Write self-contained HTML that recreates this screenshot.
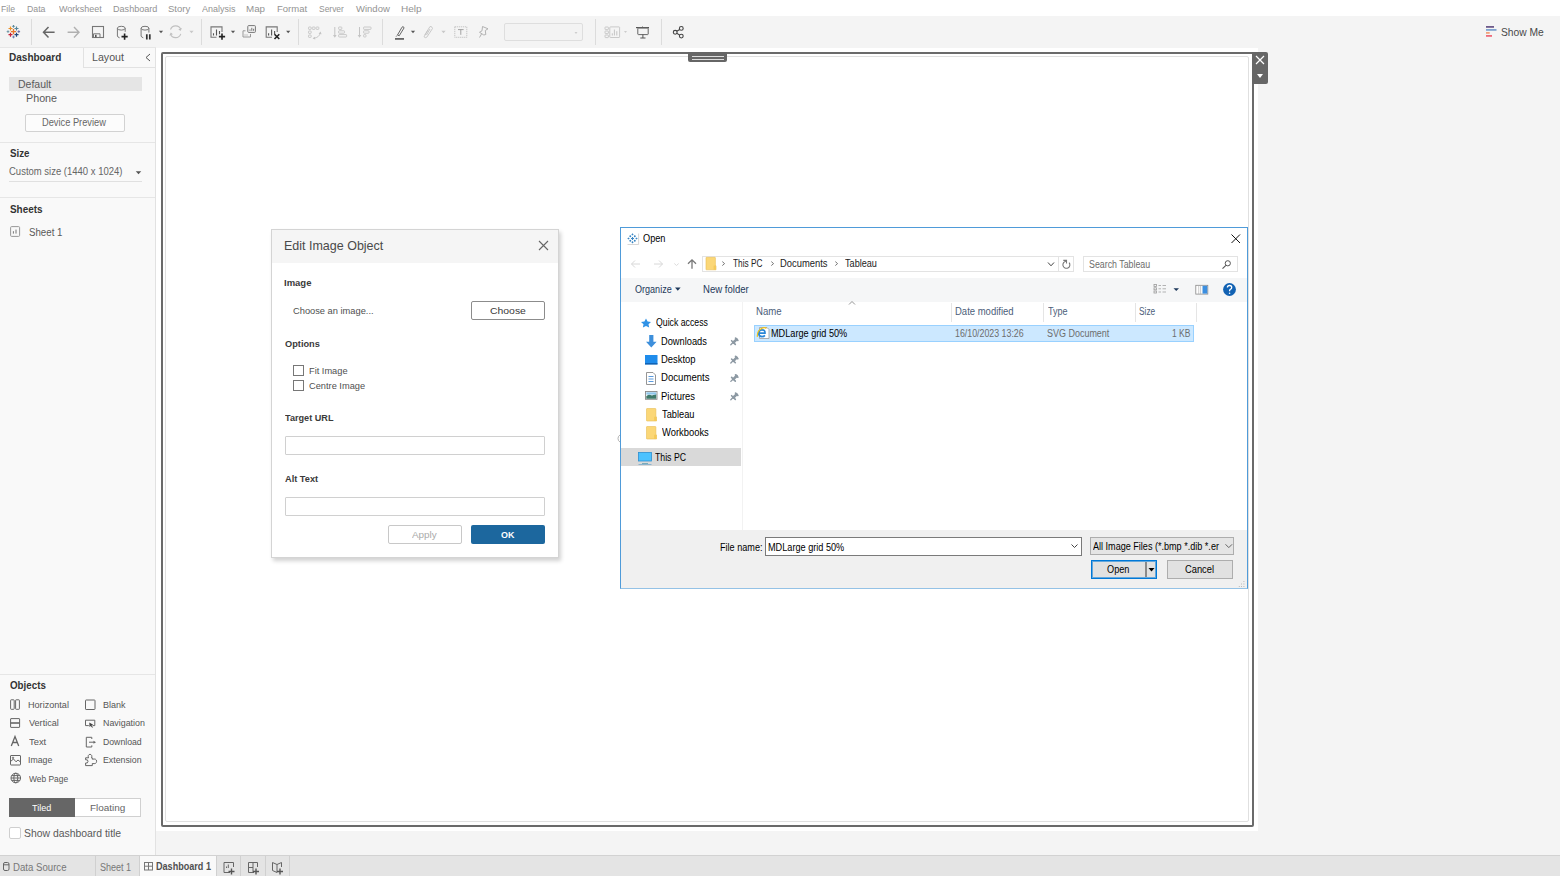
<!DOCTYPE html>
<html><head><meta charset="utf-8"><style>
html,body{margin:0;padding:0;width:1560px;height:876px;overflow:hidden;background:#fff;font-family:"Liberation Sans",sans-serif}
.t{position:absolute;white-space:pre;font-family:"Liberation Sans",sans-serif}
svg{display:block}
</style></head><body>
<div style="position:absolute;left:0px;top:0px;width:1560px;height:16px;background:#fff"></div>
<div style="position:absolute;left:0px;top:16px;width:1560px;height:32px;background:#f4f4f4"></div>
<div style="position:absolute;left:0px;top:47px;width:156px;height:1px;background:#e6e6e6"></div>
<div style="position:absolute;left:156px;top:48px;width:1404px;height:807px;background:#f4f4f4"></div>
<div style="position:absolute;left:156px;top:48px;width:1102px;height:783px;background:#fff"></div>
<div style="position:absolute;left:161px;top:52px;width:1093px;height:775px;box-sizing:border-box;border:2px solid #6a6a6a;border-radius:2px"></div>
<div style="position:absolute;left:165px;top:56px;width:1084px;height:766px;box-sizing:border-box;border:1px solid #e0e0e0;border-radius:2px"></div>
<div style="position:absolute;left:688px;top:52px;width:39px;height:10px;background:#666;border-radius:0 0 2px 2px"></div>
<div style="position:absolute;left:692px;top:56px;width:32px;height:1px;background:#ddd"></div>
<div style="position:absolute;left:692px;top:59px;width:32px;height:1px;background:#ddd"></div>
<div style="position:absolute;left:1252px;top:52px;width:16px;height:32px;background:#666;border-radius:0 2px 2px 0"></div>
<svg style="position:absolute;left:1255px;top:55px;" width="10" height="10" viewBox="0 0 10 10"><path d="M1 1L9 9M9 1L1 9" stroke="#fff" stroke-width="1.2"/></svg>
<svg style="position:absolute;left:1256px;top:73px;" width="8" height="6" viewBox="0 0 8 6"><path d="M1 1H7L4 5Z" fill="#fff"/></svg>
<div style="position:absolute;left:0px;top:48px;width:155px;height:807px;background:#f9f9f9"></div>
<div style="position:absolute;left:155px;top:48px;width:1px;height:807px;background:#e2e2e2"></div>
<div style="position:absolute;left:83px;top:48px;width:1px;height:20px;background:#e2e2e2"></div>
<div style="position:absolute;left:83px;top:67px;width:72px;height:1px;background:#e2e2e2"></div>
<div style="position:absolute;left:9px;top:77px;width:133px;height:14px;background:#e5e5e5"></div>
<div style="position:absolute;left:25px;top:114px;width:100px;height:18px;box-sizing:border-box;border:1px solid #d2d2d2;background:#fcfcfc;border-radius:2px"></div>
<div style="position:absolute;left:0px;top:142px;width:155px;height:1px;background:#e6e6e6"></div>
<div style="position:absolute;left:9px;top:181px;width:133px;height:1px;background:#e0e0e0"></div>
<div style="position:absolute;left:0px;top:197px;width:155px;height:1px;background:#e6e6e6"></div>
<div style="position:absolute;left:0px;top:674px;width:155px;height:1px;background:#e6e6e6"></div>
<div style="position:absolute;left:9px;top:798px;width:66px;height:19px;background:#666"></div>
<div style="position:absolute;left:75px;top:798px;width:66px;height:19px;box-sizing:border-box;border:1px solid #d0d0d0;border-left:none;background:#fff"></div>
<div style="position:absolute;left:9px;top:827px;width:12px;height:12px;box-sizing:border-box;border:1px solid #cfcfcf;background:#fff;border-radius:2px"></div>
<div style="position:absolute;left:0px;top:855px;width:1560px;height:21px;background:#e4e4e4"></div>
<div style="position:absolute;left:0px;top:855px;width:1560px;height:1px;background:#d2d2d2"></div>
<div style="position:absolute;left:139px;top:856px;width:77px;height:20px;background:#f9f9f9"></div>
<div style="position:absolute;left:95px;top:856px;width:1px;height:20px;background:#d0d0d0"></div>
<div style="position:absolute;left:139px;top:856px;width:1px;height:20px;background:#d0d0d0"></div>
<div style="position:absolute;left:216px;top:856px;width:1px;height:20px;background:#d0d0d0"></div>
<div style="position:absolute;left:240px;top:856px;width:1px;height:20px;background:#d0d0d0"></div>
<div style="position:absolute;left:265px;top:856px;width:1px;height:20px;background:#d0d0d0"></div>
<div style="position:absolute;left:289px;top:856px;width:1px;height:20px;background:#d0d0d0"></div>
<div style="position:absolute;left:271px;top:229px;width:288px;height:329px;background:#fff;border:1px solid #d4d4d4;box-sizing:border-box;box-shadow:2px 3px 4px rgba(0,0,0,0.18)"></div>
<div style="position:absolute;left:272px;top:230px;width:286px;height:33px;background:#f5f5f5"></div>
<svg style="position:absolute;left:538px;top:240px;" width="11" height="11" viewBox="0 0 11 11"><path d="M1 1L10 10M10 1L1 10" stroke="#666" stroke-width="1.1"/></svg>
<div style="position:absolute;left:471px;top:301px;width:74px;height:19px;box-sizing:border-box;border:1px solid #8c8c8c;background:#fff;border-radius:2px"></div>
<div style="position:absolute;left:293px;top:365px;width:11px;height:11px;box-sizing:border-box;border:1px solid #777;background:#fff"></div>
<div style="position:absolute;left:293px;top:380px;width:11px;height:11px;box-sizing:border-box;border:1px solid #777;background:#fff"></div>
<div style="position:absolute;left:285px;top:436px;width:260px;height:19px;box-sizing:border-box;border:1px solid #d0d0d0;background:#fff;border-radius:1px"></div>
<div style="position:absolute;left:285px;top:497px;width:260px;height:19px;box-sizing:border-box;border:1px solid #d0d0d0;background:#fff;border-radius:1px"></div>
<div style="position:absolute;left:388px;top:525px;width:74px;height:19px;box-sizing:border-box;border:1px solid #c8c8c8;background:#fff;border-radius:2px"></div>
<div style="position:absolute;left:471px;top:525px;width:74px;height:19px;background:#1c679e;border-radius:2px"></div>
<div style="position:absolute;left:620px;top:227px;width:628px;height:362px;box-sizing:border-box;border:1px solid #4f9bd9;border-bottom-color:#94c2e6;background:#fff"></div>
<div style="position:absolute;left:621px;top:278px;width:626px;height:24px;background:#f5f6f7"></div>
<div style="position:absolute;left:621px;top:530px;width:626px;height:58px;background:#f0f0f0"></div>
<div style="position:absolute;left:702px;top:256px;width:372px;height:16px;box-sizing:border-box;border:1px solid #e3e3e3;background:#fff"></div>
<div style="position:absolute;left:1058px;top:257px;width:1px;height:14px;background:#e3e3e3"></div>
<div style="position:absolute;left:1083px;top:256px;width:155px;height:16px;box-sizing:border-box;border:1px solid #e3e3e3;background:#fff"></div>
<div style="position:absolute;left:742px;top:302px;width:1px;height:228px;background:#f2f2f2"></div>
<div style="position:absolute;left:621px;top:448px;width:120px;height:18px;background:#d9d9d9"></div>
<div style="position:absolute;left:754px;top:325px;width:440px;height:17px;box-sizing:border-box;background:#cce8ff;border:1px solid #99d1ff"></div>
<div style="position:absolute;left:951px;top:303px;width:1px;height:19px;background:#e5e5e5"></div>
<div style="position:absolute;left:1043px;top:303px;width:1px;height:19px;background:#e5e5e5"></div>
<div style="position:absolute;left:1135px;top:303px;width:1px;height:19px;background:#e5e5e5"></div>
<div style="position:absolute;left:1196px;top:303px;width:1px;height:19px;background:#e5e5e5"></div>
<div style="position:absolute;left:765px;top:537px;width:317px;height:19px;box-sizing:border-box;border:1px solid #7a7a7a;background:#fff"></div>
<div style="position:absolute;left:1090px;top:537px;width:144px;height:18px;box-sizing:border-box;border:1px solid #adadad;background:#e5e5e5"></div>
<div style="position:absolute;left:1091px;top:560px;width:66px;height:19px;box-sizing:border-box;border:1px solid #0078d7;box-shadow:inset 0 0 0 1px rgba(0,120,215,0.55);background:#e1e1e1"></div>
<div style="position:absolute;left:1145px;top:562px;width:2px;height:15px;background:#8a8a8a"></div>
<div style="position:absolute;left:1167px;top:560px;width:66px;height:19px;box-sizing:border-box;border:1px solid #adadad;background:#e1e1e1"></div>
<svg style="position:absolute;left:0;top:0" width="1560" height="876" viewBox="0 0 1560 876"><path d="M10.9 31.6H16.1M13.5 29.0V34.2" stroke="#e8762c" stroke-width="1.4"/><path d="M8.5 28.5H12.5M10.5 26.5V30.5" stroke="#eb9129" stroke-width="1.2"/><path d="M14.5 28.5H18.5M16.5 26.5V30.5" stroke="#59879b" stroke-width="1.2"/><path d="M8.5 34.7H12.5M10.5 32.7V36.7" stroke="#c72037" stroke-width="1.2"/><path d="M14.5 34.7H18.5M16.5 32.7V36.7" stroke="#1f457e" stroke-width="1.2"/><path d="M12.2 26.3H14.8M13.5 25.0V27.6" stroke="#5b8a9c" stroke-width="1.0"/><path d="M6.7 31.6H9.3M8.0 30.3V32.9" stroke="#7199a6" stroke-width="1.0"/><path d="M17.5 31.6H20.1M18.8 30.3V32.9" stroke="#6d6aa4" stroke-width="1.0"/><path d="M12.2 37.0H14.8M13.5 35.7V38.3" stroke="#6f7fb0" stroke-width="1.0"/><rect x="31" y="19" width="1" height="26" fill="#dcdcdc"/><rect x="201" y="19" width="1" height="26" fill="#dcdcdc"/><rect x="298" y="19" width="1" height="26" fill="#dcdcdc"/><rect x="382" y="19" width="1" height="26" fill="#dcdcdc"/><rect x="595" y="19" width="1" height="26" fill="#dcdcdc"/><rect x="661" y="19" width="1" height="26" fill="#dcdcdc"/><path d="M54.6 32.2H44M48.5 27L43.5 32.2L48.5 37.4" fill="none" stroke="#666" stroke-width="1.5"/><path d="M67.6 32.2H78.5M74 27L79 32.2L74 37.4" fill="none" stroke="#b0b0b0" stroke-width="1.4"/><rect x="92.5" y="26.5" width="11" height="11" fill="none" stroke="#777" stroke-width="1.1"/><path d="M93.5 37V33.8H100V37" fill="none" stroke="#777" stroke-width="1"/><rect x="95" y="34.8" width="1.6" height="2.5" fill="#555"/><ellipse cx="121.3" cy="28.2" rx="3.9" ry="1.9" fill="none" stroke="#777" stroke-width="1"/><path d="M117.4 28.2V36Q117.4 37 119.6 37.8M125.2 28.2V31.8" fill="none" stroke="#777" stroke-width="1"/><path d="M121.5 36.6H127.7M124.6 33.5V39.7" stroke="#222" stroke-width="1.6"/><ellipse cx="145" cy="28.2" rx="3.9" ry="1.9" fill="none" stroke="#777" stroke-width="1"/><path d="M141.1 28.2V36Q141.1 37 143.3 37.8M148.9 28.2V32.6" fill="none" stroke="#777" stroke-width="1"/><path d="M146.8 34.3V39.6M149.8 34.3V39.6" stroke="#333" stroke-width="1.7"/><path d="M158.9 30.7H163.1L161 33.3Z" fill="#555"/><path d="M170.5 29.5A5.5 5.5 0 0 1 180.8 29.3M180.8 33.8A5.5 5.5 0 0 1 170.4 34" fill="none" stroke="#c0c0c0" stroke-width="1.1"/><path d="M182 28L180.5 31L178.3 29.3Z M169.3 35.5L170.8 32.5L173 34.2Z" fill="#c0c0c0"/><path d="M189.4 30.7H193.6L191.5 33.3Z" fill="#c8c8c8"/><path d="M216.5 37.2H211V26.9H222V32" fill="none" stroke="#777" stroke-width="1.1"/><path d="M213.5 33.3V35.5M216.5 29.5V35.5M219.5 31V34.3" stroke="#555" stroke-width="1.1"/><path d="M218.9 36.6H225.1M222 33.5V39.7" stroke="#222" stroke-width="1.6"/><path d="M230.9 30.7H235.1L233 33.3Z" fill="#555"/><path d="M245.5 30.8H243V37H250.5V34" fill="none" stroke="#999" stroke-width="1"/><path d="M245 35.5V34.5M247 35.5V34.5" stroke="#999" stroke-width="1"/><rect x="247.8" y="25.6" width="7.6" height="6.8" rx="0.8" fill="none" stroke="#777" stroke-width="1"/><path d="M250 30.8V29.5M251.8 30.8V27.8M253.6 30.8V28.8" stroke="#666" stroke-width="0.9"/><path d="M272 37.2H266.2V26.9H277.2V32" fill="none" stroke="#777" stroke-width="1.1"/><path d="M268.6 33.3V35.5M271.6 29.5V35.5M274.6 31V34.3" stroke="#555" stroke-width="1.1"/><path d="M274.5 34.3L279.3 39M279.3 34.3L274.5 39" stroke="#222" stroke-width="1.6"/><path d="M286.09999999999997 30.7H290.3L288.2 33.3Z" fill="#555"/><rect x="308.5" y="27" width="2.7" height="2.4" rx="0.6" fill="none" stroke="#c4c4c4" stroke-width="0.9"/><rect x="312.3" y="27" width="2.7" height="2.4" rx="0.6" fill="none" stroke="#c4c4c4" stroke-width="0.9"/><rect x="316.1" y="27" width="2.7" height="2.4" rx="0.6" fill="none" stroke="#c4c4c4" stroke-width="0.9"/><rect x="308.5" y="31" width="2.7" height="2.4" rx="0.6" fill="none" stroke="#c4c4c4" stroke-width="0.9"/><rect x="308.5" y="35" width="2.7" height="2.4" rx="0.6" fill="none" stroke="#c4c4c4" stroke-width="0.9"/><path d="M313.5 38.3Q319.5 37.5 320.3 32.8" fill="none" stroke="#c4c4c4" stroke-width="0.9"/><path d="M318.6 33.8L320.5 31.4L321.6 34.2Z M314.8 36.8L312.6 38.6L315.3 39.6Z" fill="#c4c4c4"/><path d="M334.8 27V36.5" stroke="#c4c4c4" stroke-width="1"/><path d="M333 35L334.8 37.8L336.6 35Z" fill="#c4c4c4"/><rect x="338.6" y="27" width="3.2" height="2.4" rx="0.6" fill="none" stroke="#c4c4c4" stroke-width="0.9"/><rect x="338.6" y="30.8" width="5.9" height="2.4" rx="0.6" fill="none" stroke="#c4c4c4" stroke-width="0.9"/><rect x="338.6" y="34.6" width="8" height="2.4" rx="0.6" fill="none" stroke="#c4c4c4" stroke-width="0.9"/><path d="M359.5 27V36.5" stroke="#c4c4c4" stroke-width="1"/><path d="M357.7 35L359.5 37.8L361.3 35Z" fill="#c4c4c4"/><rect x="363.6" y="27" width="7.4" height="2.4" rx="0.6" fill="none" stroke="#c4c4c4" stroke-width="0.9"/><rect x="363.6" y="30.8" width="5.4" height="2.4" rx="0.6" fill="none" stroke="#c4c4c4" stroke-width="0.9"/><rect x="363.6" y="34.6" width="2.4" height="2.4" rx="0.6" fill="none" stroke="#c4c4c4" stroke-width="0.9"/><path d="M397.5 35L402 27.2Q403 26 403.8 27.2L404 28L399.2 35.8Z" fill="none" stroke="#666" stroke-width="1"/><path d="M397.3 35.2L396 36.8" stroke="#888" stroke-width="0.9"/><rect x="395" y="38" width="9" height="1.8" fill="#666"/><path d="M410.9 30.7H415.1L413 33.3Z" fill="#555"/><path d="M428 30L424 36.8Q425.3 38.3 426.8 37.2L432.5 28.5Q432 26 430 26.5L424.8 35" fill="none" stroke="#c4c4c4" stroke-width="0.9"/><path d="M430 29L426.5 35" fill="none" stroke="#c4c4c4" stroke-width="0.9"/><path d="M441.4 30.7H445.6L443.5 33.3Z" fill="#c8c8c8"/><rect x="454.8" y="26.8" width="12" height="10.5" fill="none" stroke="#aaa" stroke-width="0.8" stroke-dasharray="1 1"/><path d="M458 29.6H463.6M460.8 29.6V34.8" stroke="#999" stroke-width="0.9"/><path d="M482.5 26.5L488 28.8L485.3 30.5L485.8 34.5L483.8 35L479.5 32.3L482 30.8Z M481.5 34L479.5 37.5" fill="none" stroke="#aaa" stroke-width="0.9"/><rect x="504.5" y="23.5" width="78" height="17" rx="1.5" fill="#f3f3f3" stroke="#dedede" stroke-width="1"/><path d="M574.5 32.1H577.5L576 33.9Z" fill="#ccc"/><rect x="605" y="27" width="3.4" height="2.6" rx="0.6" fill="none" stroke="#c4c4c4" stroke-width="0.9"/><rect x="605" y="31" width="3.4" height="2.6" rx="0.6" fill="none" stroke="#c4c4c4" stroke-width="0.9"/><rect x="605" y="35" width="3.4" height="2.6" rx="0.6" fill="none" stroke="#c4c4c4" stroke-width="0.9"/><rect x="609.8" y="26.9" width="9.8" height="10.6" rx="0.6" fill="none" stroke="#c4c4c4" stroke-width="0.9"/><path d="M612.3 35.5V33.3M614.4 35.5V29.5M616.8 35.5V31.2" stroke="#c4c4c4" stroke-width="1"/><path d="M624.0 31.1H627.0L625.5 32.9Z" fill="#ccc"/><path d="M636 27.6H649" stroke="#555" stroke-width="1.2"/><path d="M642.5 27.6V26.5" stroke="#555" stroke-width="0.9"/><rect x="637.8" y="28" width="10.4" height="6.6" rx="0.6" fill="none" stroke="#666" stroke-width="1"/><path d="M642.9 34.5V38M640.3 38H645.5" stroke="#555" stroke-width="1"/><g fill="none" stroke="#444" stroke-width="1.1"><circle cx="675.2" cy="32.3" r="1.9"/><circle cx="681.3" cy="28.4" r="1.9"/><circle cx="681.3" cy="36.1" r="1.9"/><path d="M676.8 31.3L679.7 29.5M676.8 33.3L679.7 35.1"/></g><rect x="1486" y="26" width="8" height="1.8" fill="#6e5a8a"/><rect x="1486" y="29" width="10.5" height="1.8" fill="#7fa3cf"/><rect x="1486" y="32" width="3.7" height="1.8" fill="#f2a27a"/><rect x="1486" y="35" width="6" height="1.8" fill="#ee6a7a"/><path d="M150 54L146 57.5L150 61" fill="none" stroke="#555" stroke-width="1"/><path d="M135.75 171.3H141.25L138.5 174.3Z" fill="#555"/><rect x="10.6" y="226.6" width="9" height="9.8" rx="1" fill="none" stroke="#999" stroke-width="1"/><path d="M13.4 233.6V231.2M16 233.6V229.6" stroke="#777" stroke-width="1"/><g fill="none" stroke="#666" stroke-width="1"><rect x="10.6" y="699.8" width="3.6" height="9.5" rx="0.6"/><rect x="15.6" y="699.8" width="3.8" height="9.5" rx="0.6"/><rect x="10.6" y="718.6" width="9" height="8.8" rx="0.4"/><path d="M10.6 723H19.6" stroke-width="1.6"/><rect x="85.5" y="700" width="9.5" height="9.5" rx="0.6"/><path d="M92.5 725.6H94.8V720.2H85.5V725.6H88.8"/><rect x="10.5" y="755.5" width="10" height="9.5" rx="0.5"/><path d="M10.5 761.5L13.5 759L16 761.8L18 760L20.5 762"/><circle cx="13" cy="757.8" r="0.7"/><path d="M91.8 739V737.3H86.3V747H91.8V745.3M89 742.2H94"/><path d="M85.6 757.8H88.6Q88 756.8 88.3 755.5Q89 754.3 90 754.3Q91 754.3 91.7 755.5Q92 756.8 91.5 757.8H92.3V759.2Q96.6 758.3 96.6 761.3Q96.6 764.3 92.3 763.5V765.6H85.6V763Q88 763.6 88 761.3Q88 759.2 85.6 759.8Z"/><circle cx="15.8" cy="778" r="4.8"/><ellipse cx="15.8" cy="778" rx="2" ry="4.8"/><path d="M11 778H20.6M11.8 775.6H19.8M11.8 780.4H19.8"/></g><path d="M89.3 722.6L93.2 724.8L91.5 725.3L92.9 727.2L92.2 727.8L90.8 726L89.5 727.1Z" fill="#444"/><path d="M11.3 746L15 736.6L18.7 746M12.6 742.5H17.4" fill="none" stroke="#666" stroke-width="1.3"/><path d="M93.5 740.7L96 742.2L93.5 743.7Z" fill="#666"/><g fill="none" stroke="#666" stroke-width="1"><rect x="3.5" y="862.5" width="5.5" height="8" rx="1.5"/><path d="M3.5 864.8H9"/><g stroke="#777"><rect x="144.5" y="862.5" width="8" height="7.5"/><path d="M148.5 862.5V870M144.5 866.2H152.5"/></g><path d="M230 872.5H224V862.5H233.5V867"/><path d="M226.5 868V866.5M228.3 868V864.5"/><path d="M254 872.5H248.5V862.5H257.5V867M253 862.5V872.5M248.5 867.5H253"/><path d="M277 872.5L272.5 870.5V862.5L277 864.5L281.5 862.5V867M277 864.5V872.5"/></g><path d="M228.5 871.5H234.5M231.5 868.5V874.5" stroke="#555" stroke-width="1.4"/><path d="M253 871.5H259M256 868.5V874.5" stroke="#555" stroke-width="1.4"/><path d="M277 871.5H283M280 868.5V874.5" stroke="#555" stroke-width="1.4"/><rect x="627.5" y="233.5" width="11" height="11" fill="#fff"/><path d="M638.6 233.5V244.5H627.5" fill="none" stroke="#ccc" stroke-width="0.8"/><g fill="#3a86c4"><path d="M632.5 233.2L633.6 234.4L632.5 235.6L631.4 234.4Z M632.5 241L633.6 242.2L632.5 243.4L631.4 242.2Z M627.3 238.5L628.5 237.4L629.7 238.5L628.5 239.6Z M635.3 238.5L636.5 237.4L637.7 238.5L636.5 239.6Z"/><circle cx="630.3" cy="236.3" r="0.95"/><circle cx="634.8" cy="236.3" r="0.95"/><circle cx="630.3" cy="240.7" r="0.95"/><circle cx="634.8" cy="240.7" r="0.95"/></g><path d="M631 238.5H634M632.5 237V240" stroke="#3a86c4" stroke-width="1.1"/><path d="M640 264H631.5M635 260.5L631.5 264L635 267.5" fill="none" stroke="#d8d8d8" stroke-width="1"/><path d="M654 264H662.5M659 260.5L662.5 264L659 267.5" fill="none" stroke="#d8d8d8" stroke-width="1"/><path d="M674.3 263.5L676.5 265.5L678.7 263.5" fill="none" stroke="#d8d8d8" stroke-width="0.9"/><path d="M692 268.7V259.8M688 263.8L692 259.8L696 263.8" fill="none" stroke="#777" stroke-width="1.3"/><path d="M706 257.8Q706 257.3 706.5 257.3H714.8Q715.4 257.3 715.4 257.90000000000003V265.8H716V269.8H706.5Q706 269.8 706 269.3Z" fill="#fbd777" stroke="#e8bd55" stroke-width="0.6"/><rect x="713.6" y="265.6" width="2.4" height="4.2" fill="#f4c95a"/><path d="M646.5 409.0Q646.5 408.5 647.0 408.5H655.3Q655.9 408.5 655.9 409.1V417.0H656.5V421.0H647.0Q646.5 421.0 646.5 420.5Z" fill="#fbd777" stroke="#e8bd55" stroke-width="0.6"/><rect x="654.1" y="416.8" width="2.4" height="4.2" fill="#f4c95a"/><path d="M646.5 427.0Q646.5 426.5 647.0 426.5H655.3Q655.9 426.5 655.9 427.1V435.0H656.5V439.0H647.0Q646.5 439.0 646.5 438.5Z" fill="#fbd777" stroke="#e8bd55" stroke-width="0.6"/><rect x="654.1" y="434.8" width="2.4" height="4.2" fill="#f4c95a"/><path d="M1048 262.5L1051 265.8L1054 262.5" fill="none" stroke="#444" stroke-width="1"/><path d="M1066.3 261.3A3.5 3.5 0 1 0 1069.1 262.6" fill="none" stroke="#777" stroke-width="1.1"/><path d="M1063.3 260.4H1066.5V263.5" fill="none" stroke="#777" stroke-width="1.1"/><circle cx="1227.8" cy="263.3" r="2.6" fill="none" stroke="#555" stroke-width="1"/><path d="M1225.9 265.3L1222.5 268.6" stroke="#555" stroke-width="1.1"/><g fill="none" stroke="#999" stroke-width="0.8"><rect x="1154" y="284.5" width="2.4" height="2"/><rect x="1154" y="287.8" width="2.4" height="2"/><rect x="1154" y="291" width="2.4" height="2"/></g><path d="M1158.5 285.5H1161M1162.5 285.5H1166M1158.5 288.8H1161M1162.5 288.8H1166M1158.5 292H1161M1162.5 292H1166" stroke="#aaa" stroke-width="0.9"/><path d="M1173.5 288.2H1179L1176.25 291Z" fill="#1e395b"/><rect x="1195.8" y="285.3" width="12" height="8.8" fill="#fff" stroke="#888" stroke-width="0.8"/><rect x="1202.5" y="285.8" width="4.8" height="7.8" fill="#3c8fe0"/><path d="M1198.7 285.5V294M1200.6 285.5V294" stroke="#aaa" stroke-width="0.6"/><circle cx="1229.5" cy="289.5" r="6.4" fill="#1262b3"/><path d="M1227.4 287.6Q1227.4 285.5 1229.6 285.5Q1231.7 285.5 1231.7 287.4Q1231.7 288.6 1230.4 289.3Q1229.6 289.8 1229.6 290.8V291.2" fill="none" stroke="#fff" stroke-width="1.3"/><circle cx="1229.6" cy="293.2" r="0.8" fill="#fff"/><path d="M849 304.5L852 301.5L855 304.5" fill="none" stroke="#888" stroke-width="0.9"/><path d="M1231.5 234.5L1240 243M1240 234.5L1231.5 243" stroke="#111" stroke-width="1"/><path d="M646 318.4L647.6 321.6L651 322L648.5 324.3L649.2 327.6L646 325.9L642.9 327.6L643.5 324.3L641 322L644.4 321.6Z" fill="#3092e6"/><path d="M649.2 335V341.8H646L651.3 347.5L656.6 341.8H653.4V335Z" fill="#3d8fdb"/><rect x="645" y="355" width="12.5" height="9.3" fill="#1f8ceb"/><rect x="645" y="363.2" width="12.5" height="1.3" fill="#0e5aa8"/><path d="M646.5 372.5H653L655.5 375V384.5H646.5Z" fill="#fff" stroke="#8a8a8a" stroke-width="0.9"/><path d="M648.5 376.5H653.5M648.5 379H653.5M648.5 381.5H653.5" stroke="#4a90d9" stroke-width="0.9"/><rect x="645.5" y="391.5" width="11.5" height="7.8" fill="#fff" stroke="#888" stroke-width="0.9"/><path d="M646.3 396L649 394.5L652 395.5L656.2 394V398.8H646.3Z" fill="#3f7a6a"/><rect x="646.3" y="392.3" width="9.9" height="2.3" fill="#8fc6ea"/><g stroke="#8d99a3" stroke-linecap="round"><path d="M730.8 344.7L733 342.5" stroke-width="1.3"/><path d="M731.6 340.7L735.3 344.40000000000003" stroke-width="1.6"/><path d="M733.4 342.5L736.6 339.3" stroke-width="2.6"/><path d="M735.6 338.2L737.8 340.40000000000003" stroke-width="1.8"/></g><g stroke="#8d99a3" stroke-linecap="round"><path d="M730.8 363.0L733 360.8" stroke-width="1.3"/><path d="M731.6 359.0L735.3 362.70000000000005" stroke-width="1.6"/><path d="M733.4 360.8L736.6 357.6" stroke-width="2.6"/><path d="M735.6 356.5L737.8 358.70000000000005" stroke-width="1.8"/></g><g stroke="#8d99a3" stroke-linecap="round"><path d="M730.8 381.4L733 379.2" stroke-width="1.3"/><path d="M731.6 377.4L735.3 381.1" stroke-width="1.6"/><path d="M733.4 379.2L736.6 376" stroke-width="2.6"/><path d="M735.6 374.9L737.8 377.1" stroke-width="1.8"/></g><g stroke="#8d99a3" stroke-linecap="round"><path d="M730.8 399.7L733 397.5" stroke-width="1.3"/><path d="M731.6 395.7L735.3 399.40000000000003" stroke-width="1.6"/><path d="M733.4 397.5L736.6 394.3" stroke-width="2.6"/><path d="M735.6 393.2L737.8 395.40000000000003" stroke-width="1.8"/></g><rect x="638.5" y="452.5" width="13" height="8.5" fill="#4cc2ff" stroke="#2d8fd0" stroke-width="0.8"/><path d="M642 463.5H648" stroke="#7ab" stroke-width="1"/><path d="M638.5 464.5H651.5" stroke="#7aa9c9" stroke-width="0.8"/><path d="M759.5 327.5H767L769 329.5V338.5H759.5Z" fill="#fff" stroke="#999" stroke-width="0.8"/><path d="M759.6 333.1H765Q765.2 329.9 762 329.9Q758.7 329.9 758.7 333.3Q758.7 336.6 762 336.6Q763.9 336.6 764.9 335.4" fill="none" stroke="#2a86d6" stroke-width="1.7"/><path d="M757.4 336.9Q756.9 331.2 761.4 328.6Q764.6 326.9 766.4 328.5" fill="none" stroke="#f2c416" stroke-width="1.2"/><path d="M1071.5 544.5L1074.5 547.5L1077.5 544.5" fill="none" stroke="#444" stroke-width="1"/><path d="M1225.5 544.3L1228.8 547.6L1232.1 544.3" fill="none" stroke="#555" stroke-width="0.9"/><path d="M1148.5 568H1154.5L1151.5 571.5Z" fill="#000"/><rect x="1243.4" y="581" width="1" height="1" fill="#bbb"/><rect x="1243.4" y="583.5" width="1" height="1" fill="#bbb"/><rect x="1241" y="583.5" width="1" height="1" fill="#bbb"/><rect x="1243.4" y="586" width="1" height="1" fill="#bbb"/><rect x="1241" y="586" width="1" height="1" fill="#bbb"/><rect x="1238.8" y="586" width="1" height="1" fill="#bbb"/><path d="M722.3 261.6L724.5999999999999 263.6L722.3 265.6" fill="none" stroke="#777" stroke-width="1"/><path d="M771.3 261.6L773.5999999999999 263.6L771.3 265.6" fill="none" stroke="#777" stroke-width="1"/><path d="M835.3 261.6L837.5999999999999 263.6L835.3 265.6" fill="none" stroke="#777" stroke-width="1"/><path d="M675 287.6H680.6L677.8 290.8Z" fill="#1e395b"/><path d="M620 435Q618 436 618 438.5Q618 441 620 442" fill="none" stroke="#aaa" stroke-width="0.9"/></svg>
<div class="t" style="left:1.29px;top:4px;font-size:9.5px;line-height:9.5px;color:#939393;font-weight:400;transform:scaleX(0.9143);transform-origin:0 0;">File</div>
<div class="t" style="left:27.08px;top:4px;font-size:9.5px;line-height:9.5px;color:#939393;font-weight:400;transform:scaleX(0.9211);transform-origin:0 0;">Data</div>
<div class="t" style="left:58.50px;top:4px;font-size:9.5px;line-height:9.5px;color:#939393;font-weight:400;transform:scaleX(0.9444);transform-origin:0 0;">Worksheet</div>
<div class="t" style="left:112.54px;top:4px;font-size:9.5px;line-height:9.5px;color:#939393;font-weight:400;transform:scaleX(0.9556);transform-origin:0 0;">Dashboard</div>
<div class="t" style="left:168.00px;top:4px;font-size:9.5px;line-height:9.5px;color:#939393;font-weight:400;">Story</div>
<div class="t" style="left:202.00px;top:4px;font-size:9.5px;line-height:9.5px;color:#939393;font-weight:400;transform:scaleX(0.9429);transform-origin:0 0;">Analysis</div>
<div class="t" style="left:246.47px;top:4px;font-size:9.5px;line-height:9.5px;color:#939393;font-weight:400;transform:scaleX(1.0294);transform-origin:0 0;">Map</div>
<div class="t" style="left:277.00px;top:4px;font-size:9.5px;line-height:9.5px;color:#939393;font-weight:400;">Format</div>
<div class="t" style="left:318.61px;top:4px;font-size:9.5px;line-height:9.5px;color:#939393;font-weight:400;transform:scaleX(0.8889);transform-origin:0 0;">Server</div>
<div class="t" style="left:356.00px;top:4px;font-size:9.5px;line-height:9.5px;color:#939393;font-weight:400;">Window</div>
<div class="t" style="left:400.94px;top:4px;font-size:9.5px;line-height:9.5px;color:#939393;font-weight:400;transform:scaleX(1.0556);transform-origin:0 0;">Help</div>
<div class="t" style="left:1500.52px;top:27px;font-size:10.5px;line-height:10.5px;color:#484848;font-weight:400;transform:scaleX(0.9762);transform-origin:0 0;">Show Me</div>
<div class="t" style="left:9.09px;top:52px;font-size:11px;line-height:11px;color:#333;font-weight:700;transform:scaleX(0.9107);transform-origin:0 0;">Dashboard</div>
<div class="t" style="left:92.03px;top:52px;font-size:11px;line-height:11px;color:#555;font-weight:400;transform:scaleX(0.9688);transform-origin:0 0;">Layout</div>
<div class="t" style="left:18.45px;top:80px;font-size:10px;line-height:10px;color:#5a5a5a;font-weight:400;transform:scaleX(1.0484);transform-origin:0 0;">Default</div>
<div class="t" style="left:25.93px;top:94px;font-size:10px;line-height:10px;color:#5a5a5a;font-weight:400;transform:scaleX(1.0741);transform-origin:0 0;">Phone</div>
<div class="t" style="left:42.07px;top:118px;font-size:10px;line-height:10px;color:#666;font-weight:400;transform:scaleX(0.9265);transform-origin:0 0;">Device Preview</div>
<div class="t" style="left:9.50px;top:148px;font-size:11px;line-height:11px;color:#333;font-weight:700;transform:scaleX(0.8864);transform-origin:0 0;">Size</div>
<div class="t" style="left:9.05px;top:167px;font-size:10px;line-height:10px;color:#666;font-weight:400;transform:scaleX(0.9492);transform-origin:0 0;">Custom size (1440 x 1024)</div>
<div class="t" style="left:9.50px;top:204px;font-size:11px;line-height:11px;color:#333;font-weight:700;transform:scaleX(0.9028);transform-origin:0 0;">Sheets</div>
<div class="t" style="left:28.53px;top:228px;font-size:10px;line-height:10px;color:#5a5a5a;font-weight:400;transform:scaleX(0.9697);transform-origin:0 0;">Sheet 1</div>
<div class="t" style="left:9.50px;top:680px;font-size:11px;line-height:11px;color:#333;font-weight:700;transform:scaleX(0.8875);transform-origin:0 0;">Objects</div>
<div class="t" style="left:27.69px;top:701px;font-size:9px;line-height:9px;color:#555;font-weight:400;transform:scaleX(1.0103);transform-origin:0 0;">Horizontal</div>
<div class="t" style="left:102.90px;top:701px;font-size:9px;line-height:9px;color:#555;font-weight:400;">Blank</div>
<div class="t" style="left:28.70px;top:719px;font-size:9px;line-height:9px;color:#555;font-weight:400;transform:scaleX(1.0103);transform-origin:0 0;">Vertical</div>
<div class="t" style="left:102.91px;top:719px;font-size:9px;line-height:9px;color:#555;font-weight:400;transform:scaleX(0.9854);transform-origin:0 0;">Navigation</div>
<div class="t" style="left:28.70px;top:738px;font-size:9px;line-height:9px;color:#555;font-weight:400;transform:scaleX(1.0437);transform-origin:0 0;">Text</div>
<div class="t" style="left:102.93px;top:738px;font-size:9px;line-height:9px;color:#555;font-weight:400;transform:scaleX(0.9667);transform-origin:0 0;">Download</div>
<div class="t" style="left:27.73px;top:756px;font-size:9px;line-height:9px;color:#555;font-weight:400;transform:scaleX(0.9708);transform-origin:0 0;">Image</div>
<div class="t" style="left:102.92px;top:756px;font-size:9px;line-height:9px;color:#555;font-weight:400;transform:scaleX(0.9763);transform-origin:0 0;">Extension</div>
<div class="t" style="left:28.70px;top:775px;font-size:9px;line-height:9px;color:#555;font-weight:400;transform:scaleX(0.9341);transform-origin:0 0;">Web Page</div>
<div class="t" style="left:32.00px;top:803px;font-size:9.5px;line-height:9.5px;color:#fff;font-weight:400;transform:scaleX(0.9500);transform-origin:0 0;">Tiled</div>
<div class="t" style="left:89.95px;top:803px;font-size:9.5px;line-height:9.5px;color:#666;font-weight:400;transform:scaleX(1.0469);transform-origin:0 0;">Floating</div>
<div class="t" style="left:24.05px;top:828px;font-size:11px;line-height:11px;color:#5a5a5a;font-weight:400;transform:scaleX(0.9455);transform-origin:0 0;">Show dashboard title</div>
<div class="t" style="left:13.04px;top:863px;font-size:10px;line-height:10px;color:#777;font-weight:400;transform:scaleX(0.9630);transform-origin:0 0;">Data Source</div>
<div class="t" style="left:99.90px;top:863px;font-size:10px;line-height:10px;color:#777;font-weight:400;transform:scaleX(0.9030);transform-origin:0 0;">Sheet 1</div>
<div class="t" style="left:155.59px;top:862px;font-size:10px;line-height:10px;color:#505050;font-weight:700;transform:scaleX(0.9068);transform-origin:0 0;">Dashboard 1</div>
<div class="t" style="left:284.34px;top:239px;font-size:13px;line-height:13px;color:#4a4a4a;font-weight:400;transform:scaleX(0.9608);transform-origin:0 0;">Edit Image Object</div>
<div class="t" style="left:284.00px;top:278px;font-size:9.5px;line-height:9.5px;color:#3a3a3a;font-weight:700;">Image</div>
<div class="t" style="left:292.97px;top:307px;font-size:9px;line-height:9px;color:#505050;font-weight:400;transform:scaleX(1.0329);transform-origin:0 0;">Choose an image...</div>
<div class="t" style="left:489.90px;top:306px;font-size:9.5px;line-height:9.5px;color:#3a3a3a;font-weight:400;transform:scaleX(1.0968);transform-origin:0 0;">Choose</div>
<div class="t" style="left:285.00px;top:339px;font-size:9.5px;line-height:9.5px;color:#3a3a3a;font-weight:700;transform:scaleX(0.9714);transform-origin:0 0;">Options</div>
<div class="t" style="left:308.97px;top:367px;font-size:9px;line-height:9px;color:#505050;font-weight:400;transform:scaleX(1.0278);transform-origin:0 0;">Fit Image</div>
<div class="t" style="left:308.97px;top:382px;font-size:9px;line-height:9px;color:#505050;font-weight:400;transform:scaleX(1.0283);transform-origin:0 0;">Centre Image</div>
<div class="t" style="left:285.00px;top:413px;font-size:9.5px;line-height:9.5px;color:#3a3a3a;font-weight:700;transform:scaleX(0.9600);transform-origin:0 0;">Target URL</div>
<div class="t" style="left:285.00px;top:474px;font-size:9.5px;line-height:9.5px;color:#3a3a3a;font-weight:700;transform:scaleX(0.9706);transform-origin:0 0;">Alt Text</div>
<div class="t" style="left:412.00px;top:530px;font-size:9.5px;line-height:9.5px;color:#aaa;font-weight:400;transform:scaleX(1.0417);transform-origin:0 0;">Apply</div>
<div class="t" style="left:500.80px;top:530px;font-size:9.5px;line-height:9.5px;color:#fff;font-weight:700;transform:scaleX(0.9429);transform-origin:0 0;">OK</div>
<div class="t" style="left:643.00px;top:234px;font-size:10px;line-height:10px;color:#000;font-weight:400;transform:scaleX(0.9167);transform-origin:0 0;">Open</div>
<div class="t" style="left:733.00px;top:259px;font-size:10px;line-height:10px;color:#222;font-weight:400;transform:scaleX(0.8286);transform-origin:0 0;">This PC</div>
<div class="t" style="left:780.06px;top:259px;font-size:10px;line-height:10px;color:#222;font-weight:400;transform:scaleX(0.9388);transform-origin:0 0;">Documents</div>
<div class="t" style="left:845.00px;top:259px;font-size:10px;line-height:10px;color:#222;font-weight:400;transform:scaleX(0.9118);transform-origin:0 0;">Tableau</div>
<div class="t" style="left:1089.12px;top:260px;font-size:10px;line-height:10px;color:#6d6d6d;font-weight:400;transform:scaleX(0.8824);transform-origin:0 0;">Search Tableau</div>
<div class="t" style="left:634.60px;top:285px;font-size:10px;line-height:10px;color:#1e395b;font-weight:400;transform:scaleX(0.9050);transform-origin:0 0;">Organize</div>
<div class="t" style="left:703.04px;top:285px;font-size:10px;line-height:10px;color:#1e395b;font-weight:400;transform:scaleX(0.9574);transform-origin:0 0;">New folder</div>
<div class="t" style="left:756.04px;top:307px;font-size:10px;line-height:10px;color:#4c607a;font-weight:400;transform:scaleX(0.9600);transform-origin:0 0;">Name</div>
<div class="t" style="left:955.05px;top:307px;font-size:10px;line-height:10px;color:#4c607a;font-weight:400;transform:scaleX(0.9500);transform-origin:0 0;">Date modified</div>
<div class="t" style="left:1048.00px;top:307px;font-size:10px;line-height:10px;color:#4c607a;font-weight:400;transform:scaleX(0.9048);transform-origin:0 0;">Type</div>
<div class="t" style="left:1139.17px;top:307px;font-size:10px;line-height:10px;color:#4c607a;font-weight:400;transform:scaleX(0.8333);transform-origin:0 0;">Size</div>
<div class="t" style="left:771.09px;top:329px;font-size:10px;line-height:10px;color:#000;font-weight:400;transform:scaleX(0.9146);transform-origin:0 0;">MDLarge grid 50%</div>
<div class="t" style="left:955.12px;top:329px;font-size:10px;line-height:10px;color:#6d6d6d;font-weight:400;transform:scaleX(0.8816);transform-origin:0 0;">16/10/2023 13:26</div>
<div class="t" style="left:1047.10px;top:329px;font-size:10px;line-height:10px;color:#6d6d6d;font-weight:400;transform:scaleX(0.8971);transform-origin:0 0;">SVG Document</div>
<div class="t" style="left:1172.15px;top:329px;font-size:10px;line-height:10px;color:#6d6d6d;font-weight:400;transform:scaleX(0.8500);transform-origin:0 0;">1 KB</div>
<div class="t" style="left:655.50px;top:318px;font-size:10px;line-height:10px;color:#000;font-weight:400;transform:scaleX(0.8729);transform-origin:0 0;">Quick access</div>
<div class="t" style="left:660.67px;top:337px;font-size:10px;line-height:10px;color:#000;font-weight:400;transform:scaleX(0.9271);transform-origin:0 0;">Downloads</div>
<div class="t" style="left:660.66px;top:355px;font-size:10px;line-height:10px;color:#000;font-weight:400;transform:scaleX(0.9429);transform-origin:0 0;">Desktop</div>
<div class="t" style="left:660.64px;top:373px;font-size:10px;line-height:10px;color:#000;font-weight:400;transform:scaleX(0.9592);transform-origin:0 0;">Documents</div>
<div class="t" style="left:660.66px;top:392px;font-size:10px;line-height:10px;color:#000;font-weight:400;transform:scaleX(0.9429);transform-origin:0 0;">Pictures</div>
<div class="t" style="left:661.60px;top:410px;font-size:10px;line-height:10px;color:#000;font-weight:400;transform:scaleX(0.9265);transform-origin:0 0;">Tableau</div>
<div class="t" style="left:661.60px;top:428px;font-size:10px;line-height:10px;color:#000;font-weight:400;transform:scaleX(0.9388);transform-origin:0 0;">Workbooks</div>
<div class="t" style="left:655.00px;top:453px;font-size:10px;line-height:10px;color:#000;font-weight:400;transform:scaleX(0.8714);transform-origin:0 0;">This PC</div>
<div class="t" style="left:719.59px;top:543px;font-size:10px;line-height:10px;color:#000;font-weight:400;transform:scaleX(0.9111);transform-origin:0 0;">File name:</div>
<div class="t" style="left:767.69px;top:543px;font-size:10px;line-height:10px;color:#000;font-weight:400;transform:scaleX(0.9146);transform-origin:0 0;">MDLarge grid 50%</div>
<div class="t" style="left:1093.00px;top:542px;font-size:10px;line-height:10px;color:#000;font-weight:400;transform:scaleX(0.9065);transform-origin:0 0;">All Image Files (*.bmp *.dib *.er</div>
<div class="t" style="left:1107.00px;top:565px;font-size:10px;line-height:10px;color:#000;font-weight:400;transform:scaleX(0.9167);transform-origin:0 0;">Open</div>
<div class="t" style="left:1185.07px;top:565px;font-size:10px;line-height:10px;color:#000;font-weight:400;transform:scaleX(0.9333);transform-origin:0 0;">Cancel</div>
</body></html>
